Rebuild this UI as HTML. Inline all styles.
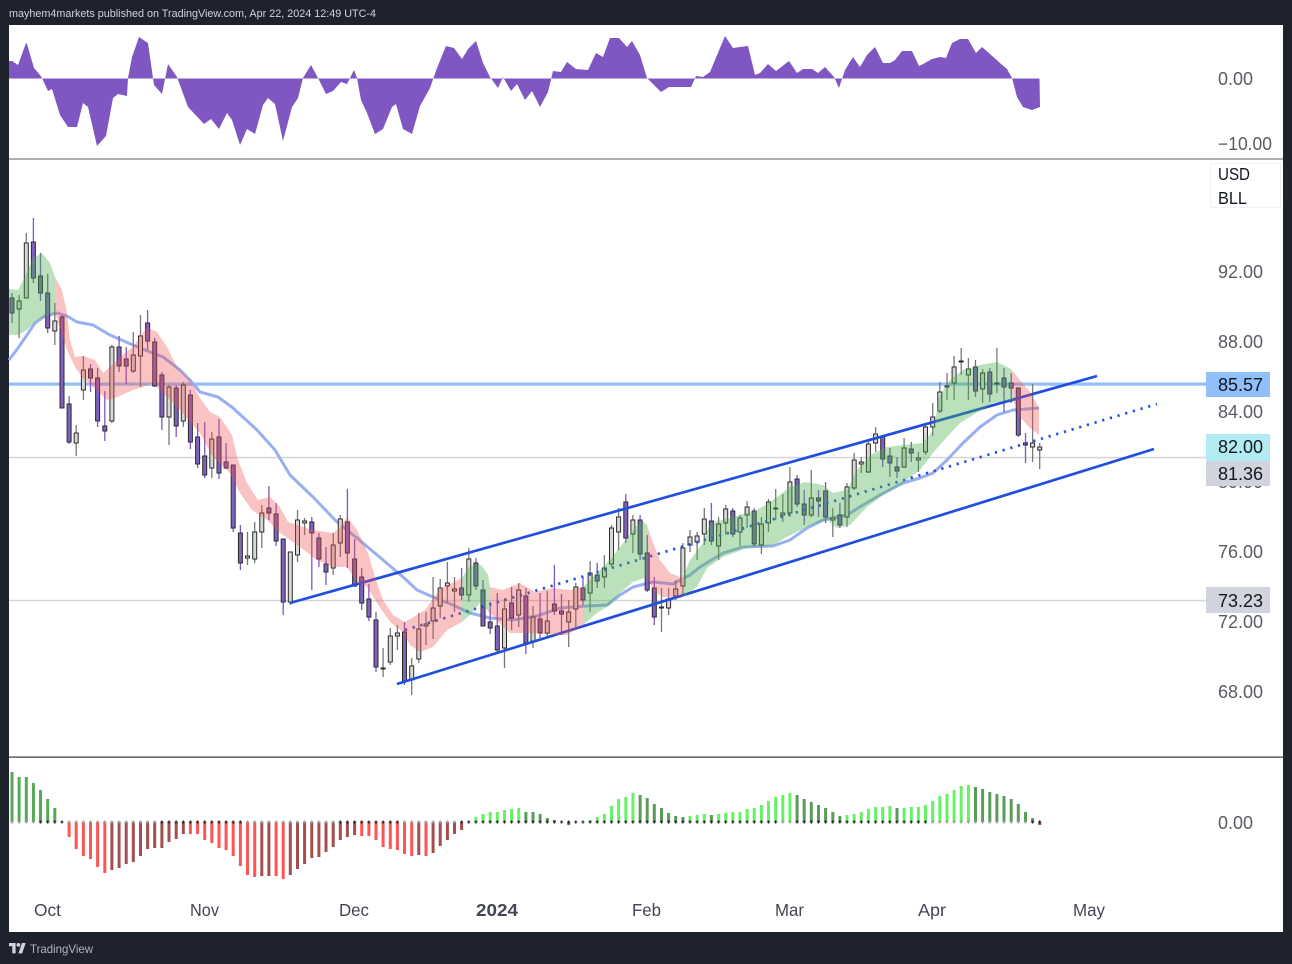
<!DOCTYPE html>
<html><head><meta charset="utf-8"><title>BLL</title>
<style>html,body{margin:0;padding:0;background:#1e222d;overflow:hidden}svg{display:block;filter:blur(.35px)}text{font-family:"Liberation Sans",sans-serif}</style></head>
<body>
<svg xmlns="http://www.w3.org/2000/svg" width="1292" height="964" viewBox="0 0 1292 964">
<defs>
<pattern id="pk" patternUnits="userSpaceOnUse" x="8.43" y="818" width="7.137" height="8"><path d="M2 4h3.1M3.57 2.4v3.2" stroke="#1c1c1c" stroke-width="1.1" fill="none"/></pattern>
<pattern id="pg" patternUnits="userSpaceOnUse" x="8.43" y="818" width="7.137" height="8"><path d="M2 4h3.1M3.57 2.4v3.2" stroke="#999" stroke-width="1.1" fill="none"/></pattern>
</defs>
<rect width="1292" height="964" fill="#1e222d"/>
<rect x="9" y="25" width="1274" height="907" fill="#fff"/>

<!-- top pane area -->
<polygon fill="#7e57c2" points="9,78.5 9,61 12,61 18,65 26,43 27,44 34,68 40,75 42,78 48,91 52,89 60,115 68,127 77,127 83,103 88,107 97,146 106,136 113,98 118,94 127,96 128,78 132,57 139,37 148,43 153,78 154,85 162,94 168,64 177,77 188,107 204,124 211,119 219,129 227,113 232,120 240,145 247,129 255,134 263,105 268,98 275,104 283,141 292,107 298,98 303,78 311,65 318,78 326,94 333,91 341,82 347,84 354,70 357,78 361,100 367,113 375,134 383,129 392,107 396,104 403,129 412,134 420,106 430,88 437,68 446,46 454,48 462,59 468,49 476,41 483,63 490,77 498,88 503,77 511,91 517,84 525,100 532,91 540,107 548,92 553,71 561,72 567,62 576,69 588,70 596,53 603,57 610,38 619,38 627,47 632,41 640,55 647,78 661,92 669,87 677,87 691,87 696,76 703,77 710,72 725,36 733,48 740,47 748,46 755,75 760,73 768,64 776,71 789,61 797,73 803,69 812,69 818,73 825,67 834,77 839,88 845,70 853,57 860,67 867,55 875,47 883,63 890,63 895,60 902,51 912,51 919,66 925,63 932,59 940,57 946,58 952,43 960,39 968,39 976,53 982,47 990,54 1000,63 1007,69 1012,78 1017,97 1023,107 1032,110 1040,107 1039.5,78.5"/>
<rect x="9" y="158.2" width="1274" height="1.6" fill="#9a9a9a"/>
<rect x="9" y="756.4" width="1274" height="1.5" fill="#5f5f5f"/>

<!-- horizontal lines -->
<rect x="9" y="456.8" width="1197" height="1.5" fill="#d6d6da"/>
<rect x="9" y="599.8" width="1197" height="1.5" fill="#d6d6da"/>
<rect x="9" y="382.5" width="1197" height="3.2" fill="#90bff9"/>

<!-- MA -->
<polyline fill="none" stroke="#98aff2" stroke-width="3" stroke-linejoin="round" points="9,360 18,348 27,335 35,323 45,316 57,313 67,316 77,322 93,325 110,335 133,345 150,352 163,357 180,370 190,380 200,392 218,397 233,408 257,430 275,450 290,475 313,497 337,522 357,538 383,560 403,577 417,590 433,597 453,605 470,613 490,618 513,620 537,616 560,608 587,606 607,605 620,595 633,587 653,582 673,584 690,575 700,567 723,553 743,547 773,546 790,540 807,528 823,520 847,515 863,505 880,495 903,483 920,478 933,473 947,460 963,443 980,427 997,415 1013,410 1027,409 1039,408"/>

<!-- wicks -->
<path fill="none" stroke="#7e57c2" stroke-width="1.3" d="M12 293V323M33.4 218V283M40.5 253V301M47.7 274V333M62 315V408M69.1 396V444M90.5 364V392M97.6 368V427M104.8 391V441M119.1 336V372M126.2 347V384M147.6 310V350M154.7 338V387M161.9 372V430M176.2 385V437M190.4 390V449M197.6 423V468M204.7 422V478M219 419V479M226.1 443V469M233.2 465V532M240.4 525V570M268.9 486V520M276.1 503V546M283.2 539V615M311.8 517V590M318.9 533V567M326 547V585M347.4 489V568M354.6 539V587M361.7 568V610M368.9 584V621M376 612V672M404.5 622V685M461.6 568V600M475.9 558V590M483 580V626M490.2 602V634M497.3 593V654M511.6 587V630M525.9 588V654M540.1 593V638M554.4 565V615M561.5 594V635M583 577V605M597.2 563V588M625.8 494V543M640.1 515V560M647.2 535V592M654.3 577V625M711.4 503V545M732.8 508V537M754.2 508V547M797.1 475V507M804.2 490V525M818.5 490V517M825.6 482V523M839.9 503V528M882.7 435V467M889.9 448V477M897 457V478M911.3 442V462M975.5 360V397M989.8 368V402M1004 368V412M1011.2 373V403M1018.3 388V437M1025.5 433V463"/>
<path fill="none" stroke="#787878" stroke-width="1.3" d="M19.1 295V338M26.3 233V298M54.8 303V345M76.2 425V456M83.4 356V400M111.9 345V423M133.3 332V373M140.5 315V387M169 385V445M183.3 382V427M211.8 432V478M247.5 532V565M254.7 522V563M261.8 505V548M290.3 552V605M297.5 510V562M304.6 518V535M333.2 533V575M340.3 515V557M383.1 648V677M390.3 628V665M397.4 625V650M411.7 658V695M418.8 613V663M426 612V645M433.1 577V639M440.2 579V618M447.4 562V603M454.5 577V612M468.8 548V602M504.5 598V668M518.7 583V627M533 606V648M547.3 591V637M568.7 600V647M575.8 583V627M590.1 561V612M604.4 555V588M611.5 525V567M618.6 508V550M632.9 515V553M661.5 588V632M668.6 588V615M675.7 580V600M682.9 543V595M690 530V552M697.1 532V560M704.3 508V545M718.6 517V560M725.7 505V535M740 515V546M747.1 501V528M761.4 517V554M768.5 499V532M775.7 489V520M782.8 494V522M789.9 467V517M811.3 470V517M832.8 508V537M847 483V527M854.2 453V490M861.3 457V473M868.4 440V473M875.6 427V452M904.1 438V468M918.4 452V472M925.5 425V455M932.7 403V436M939.8 382V413M947 373V400M954.1 356V400M961.2 348V375M968.4 358V400M982.6 369V403M996.9 348V393M1032.6 384V462M1039.7 443V469"/>

<!-- purple bodies -->
<path fill="#7f62c0" stroke="#2b2b2b" stroke-width="1" d="M10 298h4v15h-4zM31.4 242h4v36h-4zM38.5 276h4v17h-4zM45.7 293h4v35h-4zM60 317h4v91h-4zM67.1 404h4v38h-4zM88.5 369h4v9h-4zM95.6 378h4v43h-4zM102.8 426h4v5h-4zM117.1 347h4v19h-4zM124.2 359h4v7h-4zM145.6 323h4v18h-4zM152.7 342h4v44h-4zM159.9 375h4v42h-4zM174.2 388h4v38h-4zM188.4 395h4v47h-4zM195.6 437h4v27h-4zM202.7 456h4v19h-4zM217 437h4v36h-4zM224.1 462h4v6h-4zM231.2 465h4v63h-4zM238.4 533h4v30h-4zM266.9 508h4v5h-4zM274.1 514h4v27h-4zM281.2 539h4v63h-4zM309.8 522h4v11h-4zM316.9 538h4v21h-4zM324 564h4v8h-4zM345.4 522h4v31h-4zM352.6 559h4v27h-4zM359.7 577h4v26h-4zM366.9 599h4v18h-4zM374 620h4v47h-4zM402.5 632h4v49h-4zM459.6 588h4v7h-4zM473.9 563h4v23h-4zM481 590h4v36h-4zM488.2 622h4v6h-4zM495.3 626h4v24h-4zM509.6 603h4v15h-4zM523.9 596h4v47h-4zM538.1 619h4v14h-4zM552.4 604h4v7h-4zM559.5 611h4v3h-4zM581 588h4v12h-4zM595.2 575h4v6h-4zM623.8 502h4v36h-4zM638.1 520h4v34h-4zM645.2 553h4v37h-4zM652.3 588h4v29h-4zM709.4 521h4v20h-4zM730.8 511h4v23h-4zM752.2 511h4v33h-4zM795.1 479h4v25h-4zM802.2 504h4v11h-4zM816.5 498h4v3h-4zM823.6 491h4v26h-4zM837.9 515h4v10h-4zM880.7 437h4v22h-4zM887.9 456h4v7h-4zM895 467h4v4h-4zM909.3 449h4v4h-4zM973.5 367h4v24h-4zM987.8 372h4v22h-4zM1002 378h4v9h-4zM1009.2 383h4v5h-4zM1016.3 388h4v47h-4zM1023.5 443h4v2h-4z"/>
<!-- gray bodies -->
<path fill="#d8d8d8" stroke="#2b2b2b" stroke-width="1" d="M17.1 301h4v8h-4zM24.3 243h4v55h-4zM52.8 321h4v10h-4zM74.2 433h4v10h-4zM81.4 370h4v20h-4zM109.9 347h4v74h-4zM131.3 355h4v16h-4zM138.5 336h4v20h-4zM167 387h4v30h-4zM181.3 385h4v36h-4zM209.8 439h4v29h-4zM245.5 556h4v2h-4zM252.7 532h4v27h-4zM259.8 513h4v19h-4zM288.3 552h4v50h-4zM295.5 520h4v35h-4zM302.6 521h4v2h-4zM331.2 545h4v23h-4zM338.3 519h4v24h-4zM381.1 668h4v1h-4zM388.3 636h4v26h-4zM395.4 633h4v3h-4zM409.7 666h4v14h-4zM416.8 629h4v30h-4zM424 624h4v2h-4zM431.1 608h4v13h-4zM438.2 588h4v18h-4zM445.4 583h4v3h-4zM452.5 589h4v2h-4zM466.8 559h4v36h-4zM502.5 609h4v39h-4zM516.7 590h4v25h-4zM531 617h4v24h-4zM545.3 621h4v12h-4zM566.7 612h4v10h-4zM573.8 587h4v22h-4zM588.1 573h4v20h-4zM602.4 568h4v9h-4zM609.5 528h4v36h-4zM616.6 517h4v15h-4zM630.9 520h4v14h-4zM659.5 607h4v1h-4zM666.6 599h4v9h-4zM673.7 589h4v7h-4zM680.9 548h4v38h-4zM688 537h4v8h-4zM695.1 536h4v6h-4zM702.3 519h4v15h-4zM716.6 524h4v22h-4zM723.7 509h4v14h-4zM738 518h4v14h-4zM745.1 507h4v8h-4zM759.4 524h4v21h-4zM766.5 502h4v21h-4zM773.7 508h4v1h-4zM780.8 513h4v2h-4zM787.9 482h4v31h-4zM809.3 498h4v17h-4zM830.8 518h4v2h-4zM845 487h4v30h-4zM852.2 460h4v28h-4zM859.3 462h4v2h-4zM866.4 444h4v28h-4zM873.6 434h4v9h-4zM902.1 448h4v19h-4zM916.4 458h4v2h-4zM923.5 427h4v25h-4zM930.7 417h4v10h-4zM937.8 392h4v19h-4zM945 386h4v1h-4zM952.1 367h4v16h-4zM959.2 361h4v1h-4zM966.4 369h4v6h-4zM980.6 373h4v16h-4zM994.9 383h4v1h-4zM1030.6 443h4v4h-4zM1037.7 447h4v3h-4z"/>

<!-- trend lines -->
<g stroke="#1f4fdc" fill="none">
<line x1="290" y1="603" x2="1097" y2="376" stroke-width="2.7"/>
<line x1="397" y1="684" x2="1154" y2="449" stroke-width="2.7"/>
<line x1="405" y1="630" x2="1157" y2="404" stroke-width="2.7" stroke-dasharray="2.2 5.8"/>
</g>

<!-- clouds -->
<g fill="#ef4f4f" fill-opacity=".34">
<polygon points="55,277 62,290 67,313 70,340 75,357 83,356 95,360 103,373 110,367 120,357 133,347 147,327 157,332 167,347 177,367 190,380 200,398 210,412 220,417 232,435 238,460 247,483 258,500 270,497 280,507 288,522 303,527 313,530 333,533 340,527 347,517 357,530 368,553 375,577 383,600 393,615 405,622 425,610 440,589 462,578 462,622 447,630 433,647 420,652 410,645 403,632 390,622 377,603 367,587 358,583 347,567 333,567 317,560 300,547 280,533 267,520 252,510 240,493 230,473 213,457 200,433 190,422 180,410 165,395 153,383 143,387 133,390 115,398 107,400 93,387 82,377 75,367 67,350 55,313"/>
<polygon points="490,587 503,590 520,583 535,592 553,588 570,590 583,587 583,625 567,635 553,635 533,633 510,633 500,624 490,613"/>
<polygon points="647,525 653,543 660,560 670,573 680,577 683,577 683,595 677,597 663,597 653,590 647,577"/>
<polygon points="1011,369 1020,380 1030,392 1039,408 1039,435 1030,428 1020,417 1013,400"/>
</g>
<g fill="#4caf50" fill-opacity=".38">
<polygon points="9,289 18,290 25,277 33,258 42,253 50,263 55,277 55,313 45,317 37,320 27,330 18,335 9,335"/>
<polygon points="462,578 468,568 477,563 482,566 488,575 490,587 490,613 480,603 470,615 462,622"/>
<polygon points="583,587 593,577 607,563 620,547 633,530 642,520 647,525 647,577 633,582 620,593 610,605 597,613 583,625"/>
<polygon points="683,577 690,560 703,543 710,523 733,517 757,510 773,500 790,487 805,482 823,485 833,493 847,490 857,470 870,455 887,447 903,445 923,443 933,430 940,395 950,380 963,370 980,365 997,362 1007,367 1011,369 1013,400 993,403 973,415 960,423 947,437 933,453 920,470 903,483 883,495 867,507 850,525 837,528 827,520 807,527 787,537 773,545 747,548 723,557 707,568 697,587 683,597"/>
</g>

<!-- histogram -->
<g fill="none" stroke-width="3">
<path stroke="#58a858" d="M12 772V822M19.1 777V822M26.3 777V822M33.4 783V822M40.5 790V822M47.7 799V822M54.8 808V822"/>
<path stroke="#ff5555" d="M69.1 822V837M76.2 822V849M83.4 822V856M90.5 822V859M97.6 822V867M104.8 822V873M190.4 822V834M197.6 822V834M204.7 822V840M211.8 822V843M219 822V848M226.1 822V850M233.2 822V856M240.4 822V866M247.5 822V875M254.7 822V877M276.1 822V876M283.2 822V879M361.7 822V836M368.9 822V836M376 822V840M383.1 822V847M390.3 822V849M397.4 822V850M404.5 822V854M411.7 822V856M426 822V856"/>
<path stroke="#a34f4f" d="M111.9 822V870M119.1 822V868M126.2 822V864M133.3 822V862M140.5 822V856M147.6 822V849M154.7 822V848M161.9 822V848M169 822V842M176.2 822V839M183.3 822V834M261.8 822V876M268.9 822V876M290.3 822V875M297.5 822V869M304.6 822V864M311.8 822V858M318.9 822V857M326 822V852M333.2 822V847M340.3 822V840M347.4 822V837M354.6 822V835M418.8 822V855M433.1 822V853M440.2 822V846M447.4 822V840M454.5 822V834M461.6 822V830M568.7 822V825M1039.7 822V825"/>
<path stroke="#66f266" d="M475.9 817V822M483 814V822M490.2 812V822M497.3 812V822M504.5 810V822M511.6 809V822M518.7 808V822M590.1 820V822M597.2 817V822M604.4 814V822M611.5 806V822M618.6 799V822M625.8 797V822M632.9 793V822M690 816V822M697.1 815V822M704.3 814V822M718.6 814V822M725.7 813V822M732.8 812V822M740 812V822M747.1 809V822M754.2 808V822M761.4 805V822M768.5 801V822M775.7 797V822M782.8 795V822M789.9 793V822M847 815V822M854.2 814V822M861.3 812V822M868.4 809V822M875.6 807V822M882.7 807V822M889.9 806V822M904.1 808V822M911.3 807V822M918.4 807V822M925.5 805V822M932.7 801V822M939.8 796V822M947 794V822M954.1 790V822M961.2 786V822M968.4 785V822"/>
<path stroke="#5b9a5b" d="M525.9 812V822M533 812V822M540.1 814V822M547.3 818V822M554.4 820V822M640.1 795V822M647.2 798V822M654.3 804V822M661.5 808V822M668.6 813V822M675.7 816V822M682.9 817V822M711.4 815V822M797.1 795V822M804.2 799V822M811.3 802V822M818.5 805V822M825.6 808V822M832.8 812V822M839.9 816V822M897 808V822M975.5 787V822M982.6 789V822M989.8 792V822M996.9 794V822M1004 796V822M1011.2 799V822M1018.3 804V822M1025.5 812V822M1032.6 818V822"/>
</g>
<g>
<rect x="36.98" y="818" width="28.55" height="8" fill="url(#pk)"/>
<rect x="158.31" y="818" width="85.64" height="8" fill="url(#pk)"/>
<rect x="336.73" y="818" width="64.23" height="8" fill="url(#pk)"/>
<rect x="458.06" y="818" width="321.17" height="8" fill="url(#pk)"/>
<rect x="793.5" y="818" width="135.66" height="8" fill="url(#pk)"/>
<rect x="1029" y="818" width="14.27" height="8" fill="url(#pk)"/>
<rect x="8.43" y="818" width="28.55" height="8" fill="url(#pg)"/>
<rect x="65.53" y="818" width="92.78" height="8" fill="url(#pg)"/>
<rect x="243.95" y="818" width="92.78" height="8" fill="url(#pg)"/>
<rect x="400.97" y="818" width="57.1" height="8" fill="url(#pg)"/>
<rect x="779.23" y="818" width="14.27" height="8" fill="url(#pg)"/>
<rect x="929.1" y="818" width="99.9" height="8" fill="url(#pg)"/>
</g>

<!-- scale labels -->
<g font-size="18" fill="#5a5c63">
<text x="1218" y="85">0.00</text>
<text x="1218" y="150" textLength="54" lengthAdjust="spacingAndGlyphs">−10.00</text>
<text x="1218" y="278">92.00</text>
<text x="1218" y="348">88.00</text>
<text x="1218" y="418">84.00</text>
<text x="1218" y="488">80.00</text>
<text x="1218" y="558">76.00</text>
<text x="1218" y="628">72.00</text>
<text x="1218" y="698">68.00</text>
<text x="1218" y="829">0.00</text>
</g>
<rect x="1206" y="372" width="64" height="25" fill="#90bff9"/>
<rect x="1206" y="434" width="64" height="27" fill="#b2ebf2"/>
<rect x="1206" y="461" width="64" height="25" fill="#d1d4dc"/>
<rect x="1206" y="587" width="64" height="26" fill="#d1d4dc"/>
<g font-size="18" fill="#131722">
<text x="1218" y="391">85.57</text>
<text x="1218" y="453">82.00</text>
<text x="1218" y="480">81.36</text>
<text x="1218" y="607">73.23</text>
</g>
<rect x="1210.5" y="163.5" width="70" height="44" rx="2" fill="#fff" stroke="#f0f1f3"/>
<g font-size="17.5" fill="#131722">
<text x="1218" y="180" textLength="32" lengthAdjust="spacingAndGlyphs">USD</text>
<text x="1218" y="204" textLength="29" lengthAdjust="spacingAndGlyphs">BLL</text>
</g>

<!-- time axis -->
<g font-size="17.5" fill="#434651">
<text x="34" y="916" textLength="27" lengthAdjust="spacingAndGlyphs">Oct</text>
<text x="190" y="916" textLength="29" lengthAdjust="spacingAndGlyphs">Nov</text>
<text x="339" y="916" textLength="30" lengthAdjust="spacingAndGlyphs">Dec</text>
<text x="476" y="916" font-weight="bold" textLength="42" lengthAdjust="spacingAndGlyphs">2024</text>
<text x="632" y="916" textLength="29" lengthAdjust="spacingAndGlyphs">Feb</text>
<text x="775" y="916" textLength="29" lengthAdjust="spacingAndGlyphs">Mar</text>
<text x="918" y="916" textLength="28" lengthAdjust="spacingAndGlyphs">Apr</text>
<text x="1073" y="916" textLength="32" lengthAdjust="spacingAndGlyphs">May</text>
</g>

<!-- header / footer -->
<text x="9" y="17" font-size="11" fill="#d1d4dc" textLength="367" lengthAdjust="spacingAndGlyphs">mayhem4markets published on TradingView.com, Apr 22, 2024 12:49 UTC-4</text>
<g transform="translate(9,943) scale(.47,.47)" fill="#d1d4dc"><path d="M14 22H7V7H0V0h14v22zM28 22h-8L27.5 0h8L28 22z"/><circle cx="20" cy="4" r="4"/></g>
<text x="30" y="953" font-size="12" fill="#b2b5be" textLength="63" lengthAdjust="spacingAndGlyphs">TradingView</text>
</svg>
</body></html>
